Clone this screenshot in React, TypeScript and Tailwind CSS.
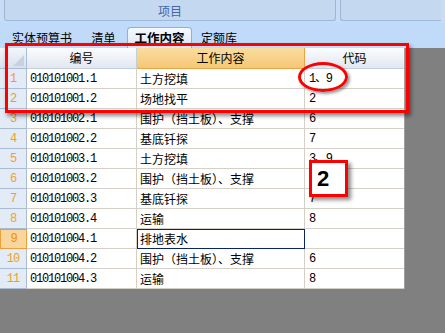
const CJK = '"Noto Sans CJK SC", "Liberation Sans", sans-serif';
const MONO = '"Liberation Mono", "Noto Sans CJK SC", monospace';

const rows = [
  { code: "010101001.1", work: "土方挖填", id: "1、9" },
  { code: "010101001.2", work: "场地找平", id: "2" },
  { code: "010101002.1", work: "围护（挡土板）、支撑", id: "6" },
  { code: "010101002.2", work: "基底钎探", id: "7" },
  { code: "010101003.1", work: "土方挖填", id: "3、9" },
  { code: "010101003.2", work: "围护（挡土板）、支撑", id: "6" },
  { code: "010101003.3", work: "基底钎探", id: "7" },
  { code: "010101003.4", work: "运输", id: "8" },
  { code: "010101004.1", work: "排地表水", id: "" },
  { code: "010101004.2", work: "围护（挡土板）、支撑", id: "6" },
  { code: "010101004.3", work: "运输", id: "8" },
];

const tabs = [
  { label: "实体预算书", w: "w-[76px]" },
  { label: "清单", w: "w-[47px]" },
  { label: "工作内容", w: "w-[65px]", active: true },
  { label: "定额库", w: "w-[54px]" },
];

function Ribbon() {
  return (
    <div className="h-[22px] bg-[#c8dcf4] flex gap-[4px] px-[4px]">
      <div className="w-[332px] h-[21px] bg-[#c4d8ef] border border-t-0 border-[#9db7d9] rounded-b-[3px] flex items-end justify-center pb-[2px]">
        <span className="text-[12px] leading-[14px] text-[#4466a6]" style={{ fontFamily: CJK }}>
          项目
        </span>
      </div>
      <div className="flex-1 h-[21px] bg-[#c4d8ef] border border-t-0 border-r-0 border-[#9db7d9] rounded-bl-[3px]" />
    </div>
  );
}

function Tabs() {
  return (
    <div className="h-[26px] bg-[#c0daf9] flex items-end pl-[4px]" style={{ fontFamily: CJK }}>
      {tabs.map((t) =>
        t.active ? (
          <div
            key={t.label}
            className={`${t.w} h-[21px] flex items-start justify-center pt-[1px] rounded-t-[4px] border border-b-0 border-[#8fb0da] bg-gradient-to-b from-[#f6f9fd] to-[#d9e6f6] text-[12.5px] font-bold text-black`}
          >
            {t.label}
          </div>
        ) : (
          <div
            key={t.label}
            className={`${t.w} h-[21px] flex items-start justify-center pt-[2px] text-[12px] text-black`}
          >
            {t.label}
          </div>
        )
      )}
    </div>
  );
}

function Grid() {
  return (
    <div className="w-[405px] border-r border-[#a0a0a0] bg-white text-[12px] text-black">
      <div className="grid grid-cols-[27px_110px_168px_99px] h-[21px]" style={{ fontFamily: CJK }}>
        <div className="relative bg-gradient-to-b from-[#f3f6fb] to-[#d7e1ee] border-r border-b border-[#a9bcd4]">
          <svg className="absolute right-[2px] bottom-[2px]" width="11" height="11" viewBox="0 0 11 11">
            <polygon points="11,0 11,11 0,11" fill="#c6d2e0" />
          </svg>
        </div>
        <div className="flex items-center justify-center bg-gradient-to-b from-[#fbfcfe] to-[#e1e7f0] border-r border-b border-[#c5cfdc]">
          编号
        </div>
        <div className="flex items-center justify-center bg-gradient-to-b from-[#fadd9f] to-[#f5c774] border-r border-b border-[#e9a445]">
          工作内容
        </div>
        <div className="flex items-center justify-center bg-gradient-to-b from-[#fbfcfe] to-[#e1e7f0] border-b border-[#c5cfdc]">
          代码
        </div>
      </div>
      {rows.map((r, i) => {
        const sel = i === 8;
        return (
          <div key={i} className="grid grid-cols-[27px_110px_168px_99px] h-[20px]">
            <div
              className={
                sel
                  ? "flex items-center justify-center bg-[#f9d69b] border border-[#ee9f3a] text-[#f09000]"
                  : "flex items-center justify-center bg-[#e3ebf6] border-r border-b border-[#a9bcd4] text-[#f0a020]"
              }
              style={{ fontFamily: MONO }}
            >
              <span className="tracking-[-1px]">{i + 1}</span>
            </div>
            <div className="flex items-center pl-[3px] border-r border-b border-[#d4d0c8]" style={{ fontFamily: MONO }}>
              <span className="tracking-[-1.2px]">{r.code}</span>
            </div>
            <div
              className={
                sel
                  ? "flex items-center pl-[2px] border border-[#0a246a]"
                  : "flex items-center pl-[3px] border-r border-b border-[#d4d0c8]"
              }
              style={{ fontFamily: CJK }}
            >
              {r.work}
            </div>
            <div className="flex items-center pl-[4px] border-b border-[#d4d0c8]" style={{ fontFamily: MONO }}>
              <span className="tracking-[-1.2px]">{r.id}</span>
            </div>
          </div>
        );
      })}
    </div>
  );
}

export default function App() {
  return (
    <div className="relative w-[445px] h-[333px] overflow-hidden bg-[#808080]">
      <Ribbon />
      <Tabs />
      <Grid />

      {/* annotations */}
      <div className="absolute left-[5px] top-[43px] w-[404px] h-[70px] border-[3px] border-[#ff0000] shadow-[2px_3px_4px_rgba(0,0,0,0.45)]" />
      <div className="absolute left-[298px] top-[62px] w-[50px] h-[30px] rounded-[50%] border-[3px] border-[#ff0000] shadow-[2px_2px_3px_rgba(0,0,0,0.4)]" />
      <div className="absolute left-[309px] top-[160px] w-[39px] h-[37px] bg-white border-[3px] border-[#ff0000] shadow-[3px_3px_4px_rgba(0,0,0,0.45)] flex items-center pl-[5px]">
        <span className="text-[22px] font-bold leading-none text-black" style={{ fontFamily: '"Liberation Sans", sans-serif' }}>
          2
        </span>
      </div>
    </div>
  );
}
